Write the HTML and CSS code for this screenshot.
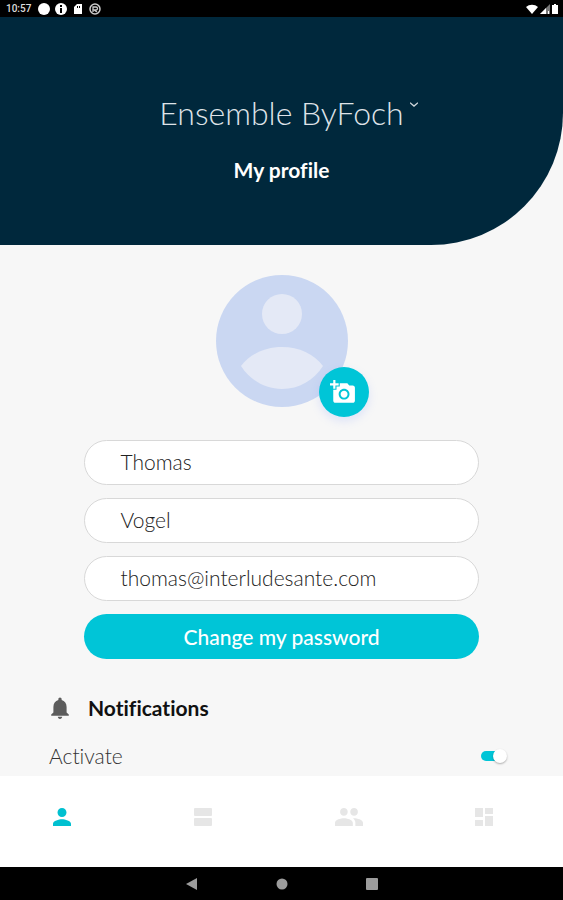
FILE: index.html
```html
<!DOCTYPE html>
<html lang="en">
<head>
<meta charset="UTF-8">
<meta name="viewport" content="width=device-width, initial-scale=1">
<title>My profile</title>
<link rel="stylesheet" href="styles.css">
</head>
<body>
<div class="status">
    <span class="time">10:57</span>
    <svg width="12" height="12" viewBox="0 0 12 12"><circle cx="6" cy="6" r="6"/></svg>
    <svg width="12" height="12" viewBox="0 0 12 12"><circle cx="6" cy="6" r="6"/><path fill="#000" d="M5 2h2v2H5zM5 5h2v5H5z"/></svg>
    <svg width="12" height="12" viewBox="0 0 12 12"><path d="M5 1h5v10H2V4z"/><path fill="#000" d="M5 3h1v2H5zM7 3h1v2H7z"/></svg>
    <svg width="12" height="12" viewBox="0 0 12 12"><circle cx="6" cy="6" r="5" fill="none" stroke="#ccc" stroke-width="1.5"/><path fill="none" stroke="#ccc" stroke-width="1.3" d="M4 9V4h3a1.5 1.5 0 0 1 0 3H5l3 2"/></svg>
    <div class="signals">
        <svg width="12" height="10" viewBox="0 0 12 10"><path d="M6 10L0 3a9 9 0 0 1 12 0z"/></svg>
        <svg width="10" height="10" viewBox="0 0 10 10"><path fill="#777" d="M0 10L10 0v10z"/><path d="M0 10l6-6v6zM8 7h1v3H8z"/></svg>
        <svg width="6" height="10" viewBox="0 0 6 10"><path d="M2 0h2v1h2v9H0V1h2z"/></svg>
    </div>
</div>
<header class="header">
    <button type="button" class="place">Ensemble ByFoch
        <svg width="8" height="5" viewBox="0 0 8 5"><path d="M0 .7L4 4 8 .7" fill="none" stroke="#cdd5da" stroke-width="1.4"/></svg>
    </button>
    <h1>My profile</h1>
</header>
<main class="main">
    <div class="avatar">
        <svg width="132" height="132" viewBox="0 0 132 132">
            <circle cx="66" cy="66" r="66" fill="#cad7f2"/>
            <circle cx="66" cy="39" r="20" fill="#e4e9f6"/>
            <path fill="#e4e9f6" d="M25 91c9-12 24-19 41-19s32 7 41 19c-9 14-24 23-41 23s-32-9-41-23z"/>
        </svg>
        <button type="button" class="photo" aria-label="Add a photo">
            <svg width="26" height="26" viewBox="0 0 24 24"><path fill="#fff" d="M3 4V1h2v3h3v2H5v3H3V6H0V4h3zm3 6V7h3V4h7l1.800 2H21c1.100 0 2 .9 2 2v12c0 1.100-.9 2-2 2H5c-1.100 0-2-.9-2-2V10h3zm7 9c2.760 0 5-2.240 5-5s-2.240-5-5-5-5 2.240-5 5 2.240 5 5 5zm-3.200-5c0 1.770 1.430 3.200 3.200 3.200s3.200-1.430 3.200-3.200-1.430-3.200-3.200-3.200-3.200 1.430-3.200 3.200z"/></svg>
        </button>
    </div>
    <form class="form">
        <input type="text" value="Thomas" aria-label="First name">
        <input type="text" value="Vogel" aria-label="Last name">
        <input type="email" value="thomas@interludesante.com" aria-label="Email">
        <button type="button">Change my password</button>
    </form>
    <section class="notif">
        <h2>
            <svg width="18" height="22" viewBox="4 2 16 20"><path fill="#5c5c5c" d="M12 22c1.100 0 2-.9 2-2h-4c0 1.100.9 2 2 2zm6-6v-5c0-3.070-1.630-5.640-4.500-6.320V4c0-.83-.67-1.500-1.500-1.500s-1.500.67-1.500 1.500v.68C7.640 5.360 6 7.920 6 11v5l-2 2v1h16v-1l-2-2z"/></svg>
            Notifications
        </h2>
        <div class="row">
            <label for="activate">Activate</label>
            <input type="checkbox" id="activate" class="switch" checked>
        </div>
    </section>
</main>
<nav class="tabs">
    <a href="#" class="on" aria-label="Profile">
        <svg width="18" height="18" viewBox="4 4 16 16"><path d="M12 12c2.210 0 4-1.790 4-4s-1.790-4-4-4-4 1.790-4 4 1.790 4 4 4zm0 2c-2.670 0-8 1.340-8 4v2h16v-2c0-2.660-5.330-4-8-4z"/></svg>
    </a>
    <a href="#" aria-label="List">
        <svg width="18" height="18" viewBox="0 0 18 18"><rect width="18" height="8" rx="1"/><rect y="10" width="18" height="8" rx="1"/></svg>
    </a>
    <a href="#" aria-label="Contacts">
        <svg width="28" height="18" viewBox="1 5 22 14"><path d="M16 11c1.660 0 2.990-1.340 2.990-3S17.660 5 16 5s-3 1.340-3 3 1.340 3 3 3zm-8 0c1.660 0 2.990-1.340 2.990-3S9.660 5 8 5 5 6.340 5 8s1.340 3 3 3zm0 2c-2.330 0-7 1.170-7 3.500V19h14v-2.500c0-2.330-4.670-3.500-7-3.500zm8 0c-.29 0-.62.02-.97.05 1.160.84 1.970 1.970 1.970 3.450V19h6v-2.500c0-2.330-4.670-3.500-7-3.500z"/></svg>
    </a>
    <a href="#" aria-label="Dashboard">
        <svg width="18" height="18" viewBox="3 3 18 18"><path d="M3 12h8V3H3zM3 21h8v-6H3zM13 21h8V11h-8zM13 3v6h8V3z"/></svg>
    </a>
</nav>
<div class="sysbar">
    <svg width="12" height="12" viewBox="0 0 12 12"><path d="M11 0v12L0 6z"/></svg>
    <svg width="12" height="12" viewBox="0 0 12 12"><circle cx="6" cy="6" r="5.500"/></svg>
    <svg width="12" height="12" viewBox="0 0 12 12"><rect width="12" height="12" rx="1"/></svg>
</div>
</body>
</html>
```
FILE: styles.css
```css
*{
    margin:0;
    padding:0;
    box-sizing:border-box;
}
body{
    display:flex;
    flex-direction:column;
    height:100vh;
    background:#f7f7f7;
    font-family:Lato,"Liberation Sans",sans-serif;
    font-size:21px;
    font-variant-ligatures:none;
}
svg{
    display:block;
}
button,input{
    border:0;
    font:inherit;
}
.status{
    display:flex;
    flex:none;
    align-items:center;
    gap:5px;
    height:17px;
    padding:0 5px 0 6px;
    background:#000;
    fill:#fff;
}
.time{
    width:27px;
    color:#ddd;
    font:500 10px Roboto,sans-serif;
}
.signals{
    display:flex;
    gap:2px;
    margin-left:auto;
}
.header{
    display:flex;
    flex:none;
    flex-direction:column;
    align-items:center;
    gap:24px;
    height:228px;
    padding-top:76px;
    background:#00283c;
    border-bottom-right-radius:132px;
    color:#fff;
}
.place{
    display:flex;
    gap:6px;
    padding-left:14px;
    background:none;
    color:#dfe3e8;
    font-size:32px;
    font-weight:300;
    line-height:40px;
}
.place svg{
    margin-top:9px;
}
h1{
    font-size:21px;
    line-height:26px;
}
.main{
    flex:1;
    min-height:0;
    overflow:auto;
    padding-top:30px;
}
.avatar{
    position:relative;
    width:132px;
    margin:0 auto 33px;
}
.photo{
    position:absolute;
    right:-21px;
    bottom:-10px;
    display:flex;
    align-items:center;
    justify-content:center;
    width:50px;
    height:50px;
    padding-right:2px;
    background:#00c5d7;
    border-radius:50%;
    box-shadow:0 4px 10px rgba(120,150,255,.2);
}
.form{
    display:flex;
    flex-direction:column;
    gap:13px;
    margin:0 15%;
}
.form input,.form button{
    width:100%;
    height:45px;
    border-radius:23px;
}
.form input{
    padding:0 35px 2px;
    background:#fff;
    border:1px solid #d8d8d8;
    color:#222;
    font-weight:300;
}
.form button{
    background:#00c5d7;
    color:#fff;
    font-weight:500;
}
.notif{
    margin:36px 56px 0 49px;
}
h2{
    display:flex;
    align-items:center;
    gap:19px;
    padding-left:2px;
    color:#111;
    font-size:21px;
    line-height:26px;
}
.row{
    display:flex;
    align-items:center;
    justify-content:space-between;
    margin-top:22px;
    color:#333;
    font-weight:300;
    line-height:26px;
}
.switch{
    position:relative;
    width:26px;
    height:14px;
    appearance:none;
}
.switch:before{
    content:"";
    display:block;
    width:22px;
    height:10px;
    margin-top:2px;
    background:#bbb;
    border-radius:5px;
}
.switch:checked:before{
    background:#00c5d7;
}
.switch:after{
    content:"";
    position:absolute;
    top:0;
    left:0;
    width:14px;
    height:14px;
    background:#fff;
    border-radius:50%;
    box-shadow:0 1px 2px rgba(0,0,0,.3);
}
.switch:checked:after{
    left:12px;
}
.tabs{
    display:grid;
    flex:none;
    grid-template-columns:repeat(4,1fr);
    align-items:center;
    height:91px;
    padding-bottom:10px;
    background:#fff;
    fill:#e6e6e6;
}
.tabs a{
    padding-left:53px;
}
.tabs .on{
    fill:#00c0d0;
}
.sysbar{
    display:flex;
    flex:none;
    align-items:center;
    justify-content:center;
    gap:78px;
    height:33px;
    background:#000;
    fill:#9c9c9c;
}
```
